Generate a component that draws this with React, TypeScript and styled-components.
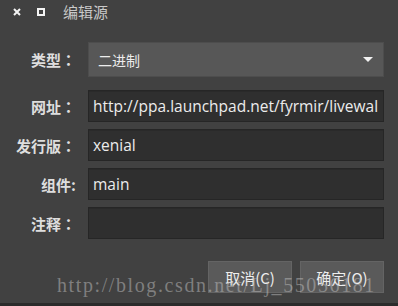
import React from 'react';
import styled, { createGlobalStyle } from 'styled-components';

const GlobalStyle = createGlobalStyle`
  html, body {
    margin: 0;
    padding: 0;
    background: #414141;
  }
  * {
    box-sizing: border-box;
  }
`;

const Dialog = styled.div`
  position: relative;
  width: 398px;
  height: 306px;
  background: #414141;
  border-bottom: 3px solid #2b2b2b;
  font-family: 'Open Sans', 'Noto Sans CJK SC', sans-serif;
  color: #e6e6e6;
  overflow: hidden;
`;

const TitleBar = styled.div`
  display: flex;
  align-items: center;
  height: 24px;
  padding-left: 13px;
`;

const WinButton = styled.div`
  width: 8px;
  height: 8px;
  margin-right: 16px;
  display: flex;
`;

const Title = styled.div`
  margin-left: 2px;
  font-family: 'Noto Sans CJK SC', sans-serif;
  font-size: 15px;
  color: #c9c9c9;
  line-height: 24px;
`;

const Form = styled.div`
  display: flex;
  flex-direction: column;
  gap: 7px;
  padding: 18px 14px 0 0;
`;

const Row = styled.div<{ $spaced?: boolean }>`
  display: flex;
  align-items: center;
  margin-bottom: ${(p) => (p.$spaced ? '6px' : '0')};
`;

const Label = styled.div`
  width: 88px;
  padding-right: 12px;
  text-align: right;
  font-family: 'Noto Sans CJK TC', 'Noto Sans CJK SC', sans-serif;
  font-weight: 700;
  font-size: 15px;
  color: #dedede;
  white-space: nowrap;
`;

const Combo = styled.div`
  flex: 1;
  height: 35px;
  display: flex;
  align-items: center;
  justify-content: space-between;
  padding: 0 10px 0 9px;
  background: #575757;
  border: 1px solid #4d4d4d;
  font-family: 'Noto Sans CJK SC', sans-serif;
  font-size: 14px;
  color: #ececec;
`;

const Arrow = styled.span`
  width: 0;
  height: 0;
  border-left: 5px solid transparent;
  border-right: 5px solid transparent;
  border-top: 5px solid #f2f2f2;
`;

const Field = styled.div`
  flex: 1;
  height: 32px;
  display: flex;
  align-items: center;
  padding: 0 4px;
  background: #2f2f2f;
  border: 1px solid #262626;
  box-shadow: inset 0 1px 0 #2a2a2a;
  font-size: 15.5px;
  color: #ececec;
  white-space: nowrap;
  overflow: hidden;
`;

const Caret = styled.span`
  display: inline-block;
  width: 1px;
  height: 19px;
  margin-left: 1px;
  background: #d8d8d8;
`;

const Actions = styled.div`
  display: flex;
  justify-content: flex-end;
  gap: 8px;
  padding: 22px 14px 0 0;
`;

const Button = styled.div`
  width: 84px;
  height: 32px;
  display: flex;
  align-items: center;
  justify-content: center;
  background: #5a5a5a;
  border: 1px solid #646464;
  font-family: 'Noto Sans CJK SC', sans-serif;
  font-size: 15px;
  color: #eeeeee;
`;

const Watermark = styled.div`
  position: absolute;
  left: 57px;
  top: 275px;
  font-family: 'Liberation Serif', serif;
  font-size: 20px;
  line-height: 1;
  letter-spacing: 1.6px;
  color: rgba(190, 190, 190, 0.5);
  pointer-events: none;
  white-space: nowrap;
`;

export default function App() {
  return (
    <>
      <GlobalStyle />
      <Dialog>
        <TitleBar>
          <WinButton>
            <svg width="8" height="8" viewBox="0 0 8 8">
              <path d="M1 1 L7 7 M7 1 L1 7" stroke="#f4f4f4" strokeWidth="2" />
            </svg>
          </WinButton>
          <WinButton>
            <svg width="8" height="8" viewBox="0 0 8 8">
              <rect x="1" y="1" width="6" height="6" fill="none" stroke="#f4f4f4" strokeWidth="2" />
            </svg>
          </WinButton>
          <Title>编辑源</Title>
        </TitleBar>
        <Form>
          <Row $spaced>
            <Label>类型：</Label>
            <Combo>
              <span>二进制</span>
              <Arrow />
            </Combo>
          </Row>
          <Row>
            <Label>网址：</Label>
            <Field>
              http://ppa.launchpad.net/fyrmir/livewal
              <Caret />
            </Field>
          </Row>
          <Row>
            <Label>发行版：</Label>
            <Field>xenial</Field>
          </Row>
          <Row>
            <Label>组件:</Label>
            <Field>main</Field>
          </Row>
          <Row>
            <Label>注释：</Label>
            <Field />
          </Row>
        </Form>
        <Actions>
          <Button>取消(C)</Button>
          <Button>确定(O)</Button>
        </Actions>
        <Watermark>http://blog.csdn.net/Lj_55056181</Watermark>
      </Dialog>
    </>
  );
}
